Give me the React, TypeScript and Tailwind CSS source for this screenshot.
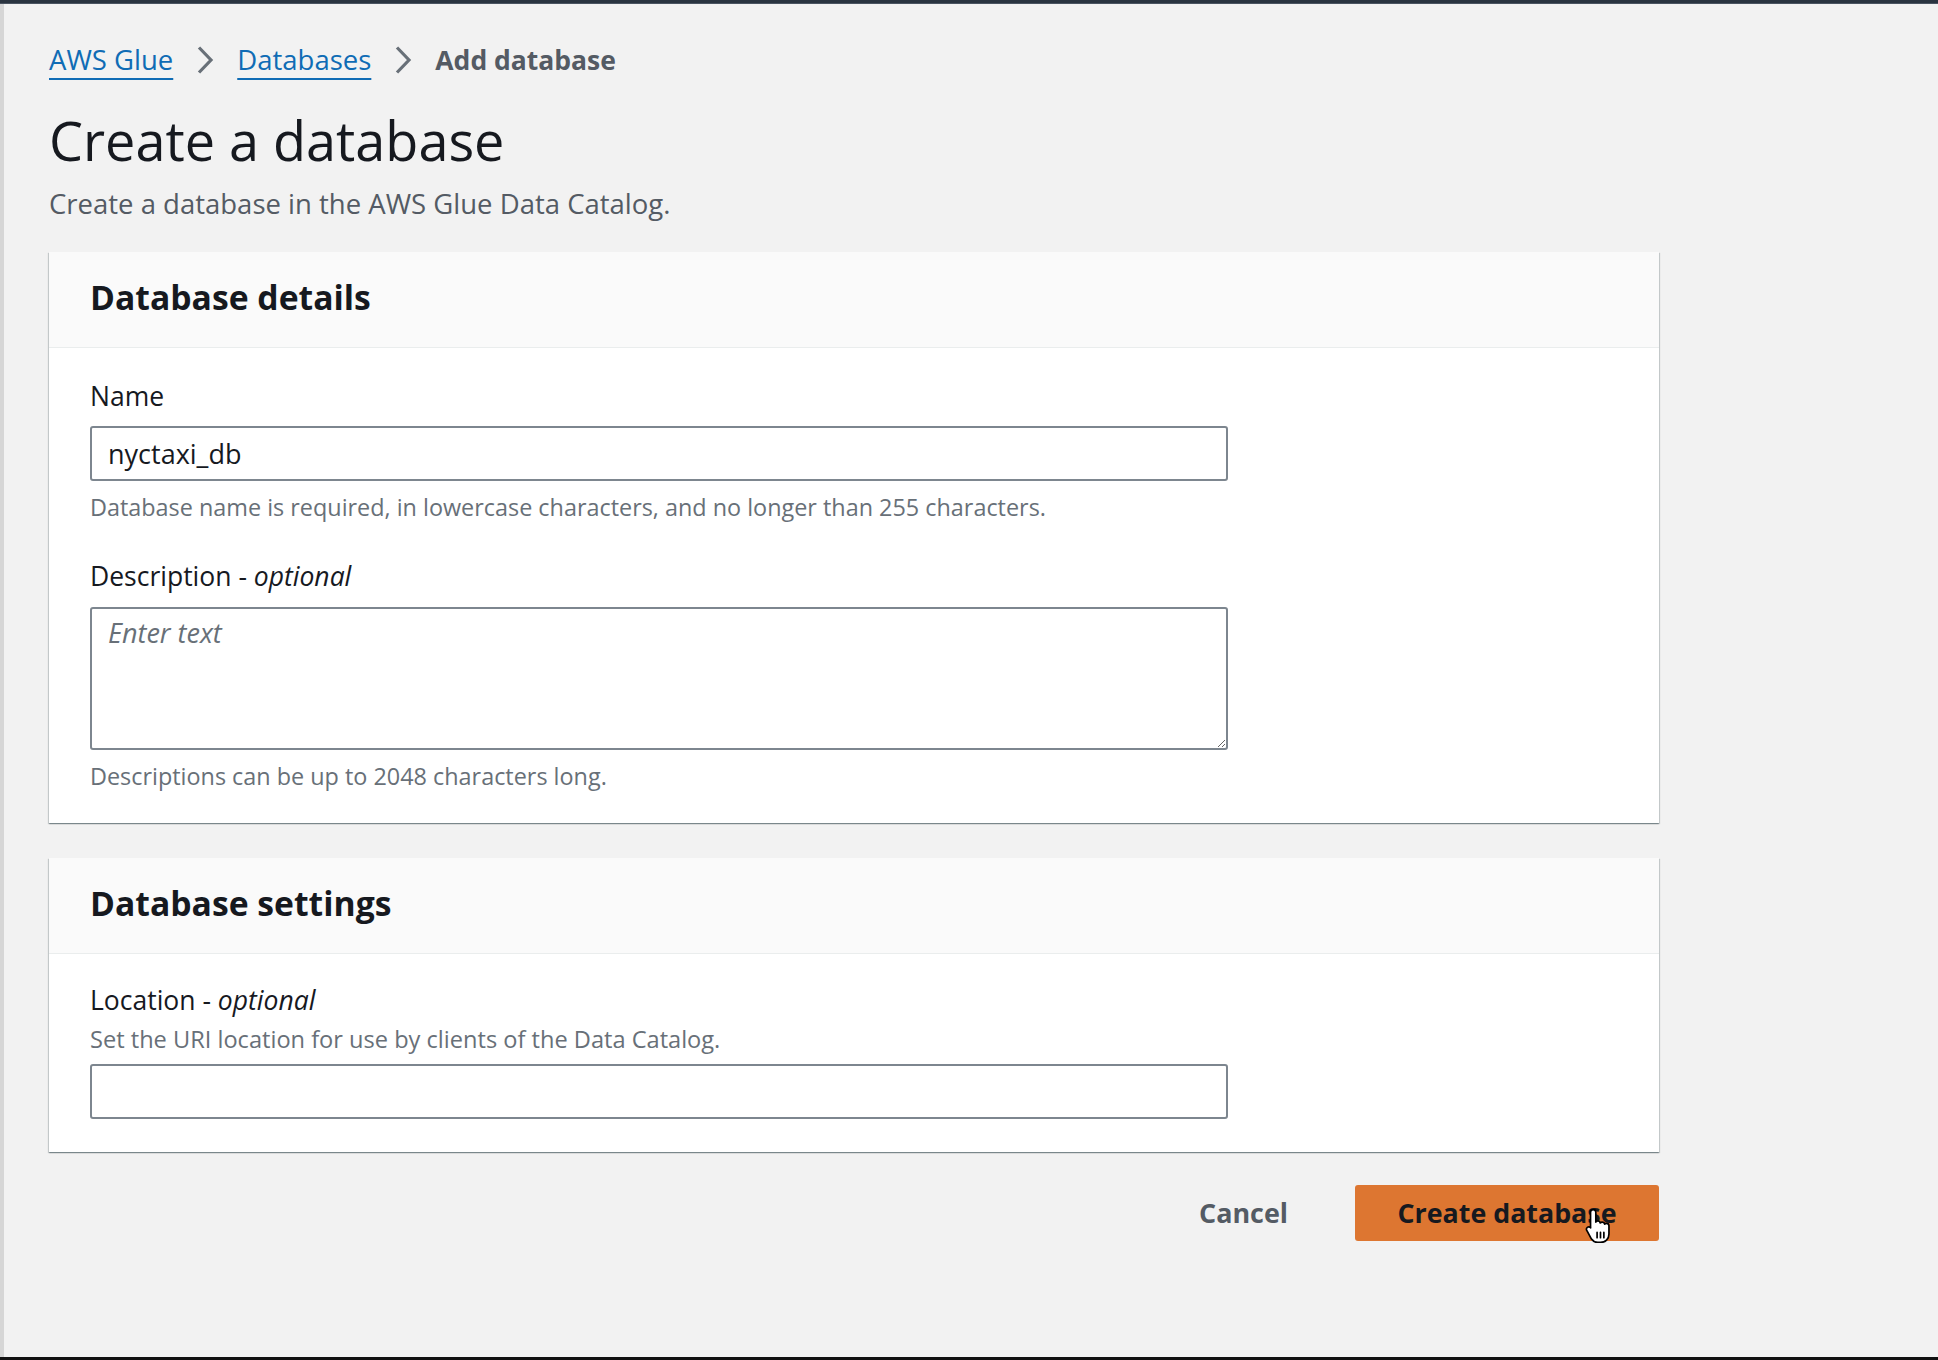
import React from "react";

function Chevron() {
  return (
    <svg width="18" height="30" viewBox="0 0 18 30" className="mx-[23px] shrink-0" aria-hidden="true">
      <path d="M3 2.5 L15 15 L3 27.5" fill="none" stroke="#687078" strokeWidth="3.2" strokeLinecap="butt" strokeLinejoin="miter" />
    </svg>
  );
}

function HandCursor() {
  return (
    <svg
      width="32"
      height="36"
      viewBox="0 0 30 34"
      className="absolute left-[228px] top-[22px] pointer-events-none"
      aria-hidden="true"
    >
      <path
        d="M9.5 2.5c1.4 0 2.5 1.1 2.5 2.5v9.2c.4-.6 1.1-1 1.9-1 1.2 0 2.1.8 2.3 1.9.4-.5 1.1-.9 1.8-.9 1.2 0 2.1.8 2.3 1.9.4-.4 1-.7 1.7-.7 1.3 0 2.4 1.1 2.4 2.4v7.6c0 4.8-3.4 8.1-8 8.1h-2.6c-2.7 0-4.4-1.1-5.9-3.2L3.6 22.4c-.8-1.1-.6-2.5.4-3.2 1-.7 2.4-.5 3.1.5L7 19V5c0-1.4 1.1-2.5 2.5-2.5z"
        fill="#ffffff"
        stroke="#000000"
        strokeWidth="1.6"
        strokeLinejoin="round"
      />
      <path d="M13.2 24v5M16.4 24v5M19.6 24v5" stroke="#000000" strokeWidth="1.6" strokeLinecap="round" />
    </svg>
  );
}

export default function App() {
  return (
    <div
      className="w-full h-[1360px] flex flex-col bg-[#f2f2f2] overflow-hidden text-[#16191f]"
      style={{ fontFamily: '"Open Sans", "Noto Sans", sans-serif' }}
    >
      <div className="h-[4px] shrink-0 bg-[#2a3440] border-b border-[#4a5461]" />
      <div className="flex-1 flex flex-col border-l-[4px] border-[#d6d6d6] pl-[45px]">
        {/* Breadcrumb */}
        <nav className="mt-[36px] flex items-center h-[40px] text-[27.5px] leading-[40px]">
          <a className="text-[#0f6cb5] underline decoration-2 underline-offset-[8px] cursor-pointer">AWS Glue</a>
          <Chevron />
          <a className="text-[#0f6cb5] underline decoration-2 underline-offset-[8px] cursor-pointer">Databases</a>
          <Chevron />
          <span className="text-[#545b64] font-bold text-[26.5px]">Add database</span>
        </nav>

        {/* Heading */}
        <h1 className="mt-[28px] text-[54px] leading-[64px] font-normal text-[#16191f]">Create a database</h1>
        <p className="mt-[14px] text-[27.5px] leading-[36px] text-[#545b64]">
          Create a database in the AWS Glue Data Catalog.
        </p>

        {/* Card 1 */}
        <section className="mt-[30px] w-[1610px] bg-white shadow-[0_1px_1px_0_rgba(0,28,36,0.3),1px_1px_1px_0_rgba(0,28,36,0.15),-1px_1px_1px_0_rgba(0,28,36,0.15)]">
          <div className="bg-[#fafafa] border-b border-[#eaeded] px-[41px] pt-[23px] pb-[28px]">
            <h2 className="text-[33.7px] leading-[44px] font-bold text-[#16191f]">Database details</h2>
          </div>
          <div className="px-[41px] pt-[30px] pb-[32px] flex flex-col">
            <label className="text-[26.5px] leading-[36px] text-[#16191f]">Name</label>
            <input
              readOnly
              value="nyctaxi_db"
              className="mt-[12px] w-[1138px] h-[55px] border-2 border-[#7d868f] rounded-[3px] bg-white px-[16px] text-[27px] text-[#16191f] outline-none"
            />
            <p className="mt-[11px] text-[23.4px] leading-[30px] text-[#687078]">
              Database name is required, in lowercase characters, and no longer than 255 characters.
            </p>
            <label className="mt-[36px] text-[26.5px] leading-[36px] text-[#16191f]">
              Description - <i>optional</i>
            </label>
            <textarea
              placeholder="Enter text"
              className="mt-[13px] w-[1138px] h-[143px] border-2 border-[#7d868f] rounded-[3px] bg-white px-[16px] py-[6px] text-[27px] leading-[36px] text-[#16191f] outline-none placeholder:italic placeholder:text-[#687078]"
            />
            <p className="mt-[11px] text-[23.4px] leading-[30px] text-[#687078]">
              Descriptions can be up to 2048 characters long.
            </p>
          </div>
        </section>

        {/* Card 2 */}
        <section className="mt-[35px] w-[1610px] bg-white shadow-[0_1px_1px_0_rgba(0,28,36,0.3),1px_1px_1px_0_rgba(0,28,36,0.15),-1px_1px_1px_0_rgba(0,28,36,0.15)]">
          <div className="bg-[#fafafa] border-b border-[#eaeded] px-[41px] pt-[23px] pb-[28px]">
            <h2 className="text-[33.7px] leading-[44px] font-bold text-[#16191f]">Database settings</h2>
          </div>
          <div className="px-[41px] pt-[28px] pb-[33px] flex flex-col">
            <label className="text-[26.5px] leading-[36px] text-[#16191f]">
              Location - <i>optional</i>
            </label>
            <p className="mt-[6px] text-[23.6px] leading-[30px] text-[#687078]">
              Set the URI location for use by clients of the Data Catalog.
            </p>
            <input
              readOnly
              value=""
              className="mt-[10px] w-[1138px] h-[55px] border-2 border-[#7d868f] rounded-[3px] bg-white px-[16px] text-[27px] text-[#16191f] outline-none"
            />
          </div>
        </section>

        {/* Actions */}
        <div className="mt-[33px] w-[1610px] flex justify-end items-center">
          <button className="text-[26.9px] leading-[36px] font-bold text-[#545b64] mr-[67px]">Cancel</button>
          <div className="relative">
            <button className="w-[304px] h-[56px] rounded-[3px] bg-[#dd7631] text-[26.8px] leading-[36px] font-bold text-[#16191f]">
              Create database
            </button>
            <HandCursor />
          </div>
        </div>
      </div>
      <div className="h-[3px] shrink-0 bg-[#111111]" />
    </div>
  );
}
